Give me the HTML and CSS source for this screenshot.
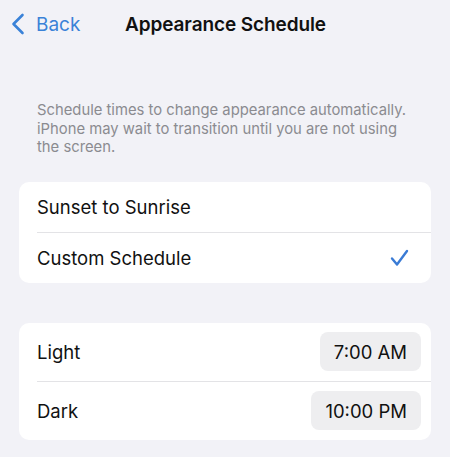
FILE: index.html
```html
<!DOCTYPE html>
<html>
<head>
<meta charset="utf-8">
<link rel="stylesheet" href="styles.css">
</head>
<body>
<div class="screen">
  <header class="nav">
    <div class="back">
      <svg class="chev" width="14" height="22" viewBox="0 0 14 22"><path d="M11.5 2 L2.5 11 L11.5 20" fill="none" stroke="#3a82d8" stroke-width="2.6" stroke-linecap="round" stroke-linejoin="round"/></svg>
      <span>Back</span>
    </div>
    <div class="title">Appearance Schedule</div>
  </header>
  <p class="desc">Schedule times to change appearance automatically. iPhone may wait to transition until you are not using the screen.</p>
  <div class="card">
    <div class="row"><span>Sunset to Sunrise</span></div>
    <div class="row"><span>Custom Schedule</span>
      <svg class="check" width="19" height="18" viewBox="0 0 19 18"><path d="M2 9.5 L7 15.5 L17 2" fill="none" stroke="#3a7bd5" stroke-width="2.4" stroke-linecap="round" stroke-linejoin="round"/></svg>
    </div>
  </div>
  <div class="card card2">
    <div class="row tall"><span>Light</span><span class="pill">7:00 AM</span></div>
    <div class="row tall"><span>Dark</span><span class="pill">10:00 PM</span></div>
  </div>
</div>
</body>
</html>
```
FILE: styles.css
```css
html, body { margin: 0; padding: 0; }
body {
  background: #f2f2f7;
  font-family: Inter, "Liberation Sans", sans-serif;
  color: #111;
  width: 450px;
  height: 457px;
  overflow: hidden;
}
.screen { padding: 0 19px; }
.nav {
  position: relative;
  height: 48px;
  display: flex;
  align-items: center;
}
.back {
  display: flex;
  align-items: center;
  gap: 11px;
  margin-left: -8px;
  color: #3a82d8;
  font-size: 19px;
}
.chev { display: block; }
.title {
  position: absolute;
  left: 106px;
  top: 13px;
  font-weight: 600;
  font-size: 19px;
  letter-spacing: -0.1px;
}
.desc {
  margin: 53px 0 0;
  padding: 0 20px 0 18px;
  font-size: 14.8px;
  line-height: 18.5px;
  color: #8b8b90;
}
.card {
  margin-top: 25px;
  background: #fff;
  border-radius: 10px;
}
.card2 { margin-top: 40px; }
.row {
  height: 50px;
  margin-left: 18px;
  padding-right: 22px;
  display: flex;
  align-items: center;
  justify-content: space-between;
  font-size: 18.5px;
}
.row + .row { border-top: 1px solid #e3e3e6; }
.row.tall { height: 58px; padding-right: 10px; }
.pill {
  background: #eeeef0;
  border-radius: 8px;
  padding: 0 14px;
  height: 39px;
  display: flex;
  align-items: center;
}
.check { margin-top: 1px; }
```
